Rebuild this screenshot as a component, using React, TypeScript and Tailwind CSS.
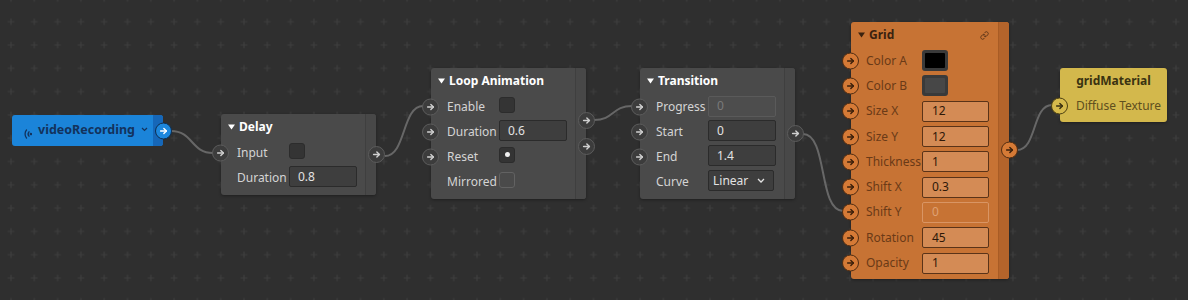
import React from "react";
import { Link } from "lucide-react";

type Tone = "gray" | "orange" | "yellow" | "blue";

const portTone: Record<Tone, string> = {
  gray: "bg-[#3c3c3c] border-[#5c5c5c] text-[#d0d0d0]",
  orange: "bg-[#d57a36] border-[#4f2c12] text-[#3a1f0b]",
  yellow: "bg-[#d6ba4c] border-[#4c4012] text-[#3a3110]",
  blue: "bg-[#1d87dd] border-[#0e2d4e] text-white",
};

function Arrow() {
  return (
    <svg width="9" height="9" viewBox="0 0 10 10" fill="none" stroke="currentColor" strokeWidth="1.6" strokeLinecap="round" strokeLinejoin="round">
      <path d="M1.8 5H8.2" />
      <path d="M5.4 2.2L8.2 5L5.4 7.8" />
    </svg>
  );
}

function Port({ tone, side = "left" }: { tone: Tone; side?: "left" | "right" }) {
  return (
    <div
      className={
        "absolute top-1/2 -translate-y-1/2 z-10 flex h-[17px] w-[17px] items-center justify-center rounded-full border-[1.5px] " +
        (side === "left" ? "left-[-9px] " : "right-[-9px] ") +
        portTone[tone]
      }
    >
      <Arrow />
    </div>
  );
}

function Caret({ color }: { color: string }) {
  return (
    <svg width="7" height="6" viewBox="0 0 7 6" className="mr-[4px]">
      <path d="M0 0.5H7L3.5 5.5Z" fill={color} />
    </svg>
  );
}

function GInput({ v, disabled }: { v: string; disabled?: boolean }) {
  return disabled ? (
    <div className="mb-[1px] flex h-[21px] w-[68px] items-center rounded-[2px] border border-[#5a5a5a] bg-[#4d4d4d] px-[8px] text-[#7a7a7a]">
      {v}
    </div>
  ) : (
    <div className="mb-[2px] flex h-[21px] w-[68px] items-center rounded-[2px] border border-[#2b2b2b] bg-[#3e3e3e] px-[8px] text-[#e2e2e2]">
      {v}
    </div>
  );
}

function Check({ dot, outline }: { dot?: boolean; outline?: boolean }) {
  return (
    <div
      className={
        "mb-[4px] flex h-[16px] w-[16px] items-center justify-center rounded-[3px] border " +
        (outline ? "border-[#626262] bg-[#4a4a4a]" : "border-[#2c2c2c] bg-[#343434]")
      }
    >
      {dot && <div className="h-[5px] w-[5px] rounded-full bg-[#f0f0f0]" />}
    </div>
  );
}

function GRow({ label, port = true, children }: { label: string; port?: boolean; children?: React.ReactNode }) {
  return (
    <div className="relative flex h-[25px] items-center pl-[16px]">
      {port && <Port tone="gray" />}
      <span className="w-[52px] text-[#d4d4d4]">{label}</span>
      {children}
    </div>
  );
}

function GrayNode({
  x,
  y,
  title,
  outputs,
  children,
}: {
  x: number;
  y: number;
  title: string;
  outputs: number;
  children: React.ReactNode;
}) {
  return (
    <div className="absolute flex w-[155px] rounded-[3px] bg-[#4a4a4a] shadow-[0_1px_3px_rgba(0,0,0,0.35)]" style={{ left: x, top: y }}>
      <div className="flex flex-1 flex-col pb-[5px]">
        <div className="flex h-[26px] items-center pl-[7px] font-bold text-white">
          <Caret color="#ffffff" />
          {title}
        </div>
        {children}
      </div>
      <div className="relative w-[11px] rounded-r-[3px] border-l border-[#3f3f3f] bg-[#484848]">
        <div className="absolute right-0 top-1/2 flex -translate-y-1/2 flex-col gap-[9px]">
          {Array.from({ length: outputs }).map((_, i) => (
            <div key={i} className="relative h-[17px] w-0">
              <Port tone="gray" side="right" />
            </div>
          ))}
        </div>
      </div>
    </div>
  );
}

function OInput({ v, disabled }: { v: string; disabled?: boolean }) {
  return disabled ? (
    <div className="flex h-[21px] w-[67px] items-center rounded-[2px] border border-[#d99564] bg-[#c77334] px-[9px] text-[#dea173]">
      {v}
    </div>
  ) : (
    <div className="flex h-[21px] w-[67px] items-center rounded-[2px] border border-[#5a3318] bg-[#d48b55] px-[9px] text-[#2e1808]">
      {v}
    </div>
  );
}

function Swatch({ fill }: { fill: string }) {
  return (
    <div className="flex h-[21px] w-[26px] items-center justify-center rounded-[3px] border-[2px] border-[#3a3a3a] bg-[#3a3a3a]">
      <div className={"h-[15px] w-[20px] rounded-[1px] " + fill} />
    </div>
  );
}

function ORow({ label, children }: { label: string; children: React.ReactNode }) {
  return (
    <div className="relative flex h-[25.3px] items-center pl-[15px]">
      <Port tone="orange" />
      <span className="w-[56px] text-[#6a3a17]">{label}</span>
      {children}
    </div>
  );
}

export default function App() {
  return (
    <div className="relative h-[300px] w-[1188px] overflow-hidden bg-[#2f2f2f] font-['Noto_Sans',sans-serif] text-[12px] leading-none">
      <svg className="absolute inset-0" width="1188" height="300">
        <defs>
          <pattern id="dots" x="-0.65" y="10.05" width="23.3" height="23.3" patternUnits="userSpaceOnUse">
            <path d="M11.65 8.4V14.9M8.4 11.65H14.9" stroke="#3d3d3d" strokeWidth="1.2" />
          </pattern>
        </defs>
        <rect width="1188" height="300" fill="url(#dots)" />
        <g fill="none" stroke="#676767" strokeWidth="2">
          <path d="M171 131C193 131 191 153 213 153" />
          <path d="M385 156C406 156 402 106 423 106" />
          <path d="M594 120C614 120 612 106 632 106" />
          <path d="M803 134C828 134 818 211 843 211" />
          <path d="M1017 150C1037 150 1032 105 1052 105" />
        </g>
      </svg>

      {/* videoRecording */}
      <div className="absolute left-[12px] top-[115px] flex h-[31px] w-[151px] rounded-[3px] bg-[#1b84d9]">
        <div className="flex flex-1 items-center pl-[11px] font-bold text-[#13325c]">
          <svg width="9" height="12" viewBox="0 0 9 12" fill="none" stroke="#13325c" strokeWidth="1.3" strokeLinecap="round" className="mr-[6px] mt-[6px]">
            <path d="M3.5 2C1.6 4 1.6 8 3.5 10" />
            <path d="M6 3.8C5 5 5 7 6 8.2" />
            <circle cx="7.9" cy="6" r="0.6" fill="#13325c" />
          </svg>
          <span className="text-[12.5px]">videoRecording</span>
          <svg width="7" height="5" viewBox="0 0 7 5" fill="none" stroke="#13325c" strokeWidth="1.2" className="ml-[6px] mb-[2px]">
            <path d="M1 1L3.5 3.5L6 1" />
          </svg>
        </div>
        <div className="relative w-[10px] rounded-r-[3px] bg-[#1667b8]">
          <Port tone="blue" side="right" />
        </div>
      </div>

      {/* Delay */}
      <GrayNode x={221} y={114} title="Delay" outputs={1}>
        <GRow label="Input">
          <Check />
        </GRow>
        <GRow label="Duration" port={false}>
          <GInput v="0.8" />
        </GRow>
      </GrayNode>

      {/* Loop Animation */}
      <GrayNode x={431} y={68} title="Loop Animation" outputs={2}>
        <GRow label="Enable">
          <Check />
        </GRow>
        <GRow label="Duration">
          <GInput v="0.6" />
        </GRow>
        <GRow label="Reset">
          <Check dot />
        </GRow>
        <GRow label="Mirrored" port={false}>
          <Check outline />
        </GRow>
      </GrayNode>

      {/* Transition */}
      <GrayNode x={640} y={68} title="Transition" outputs={1}>
        <GRow label="Progress">
          <GInput v="0" disabled />
        </GRow>
        <GRow label="Start">
          <GInput v="0" />
        </GRow>
        <GRow label="End">
          <GInput v="1.4" />
        </GRow>
        <GRow label="Curve" port={false}>
          <div className="mb-[2px] flex h-[21px] w-[66px] items-center justify-between rounded-[2px] border border-[#2b2b2b] bg-[#3e3e3e] pl-[4px] pr-[8px] text-[#e2e2e2]">
            <span>Linear</span>
            <svg width="8" height="5" viewBox="0 0 8 5" fill="none" stroke="#e2e2e2" strokeWidth="1.3">
              <path d="M1 1L4 4L7 1" />
            </svg>
          </div>
        </GRow>
      </GrayNode>

      {/* Grid */}
      <div className="absolute left-[851px] top-[22px] flex w-[158px] rounded-[3px] bg-[#c77334] shadow-[0_1px_3px_rgba(0,0,0,0.35)]">
        <div className="flex flex-1 flex-col pb-[3px]">
          <div className="flex h-[26px] items-center pl-[7px] pr-[9px] font-bold text-[#3b220f]">
            <Caret color="#3b220f" />
            <span className="flex-1">Grid</span>
            <Link size={9} strokeWidth={2.4} color="#5a3418" />
          </div>
          <ORow label="Color A">
            <Swatch fill="bg-black" />
          </ORow>
          <ORow label="Color B">
            <Swatch fill="bg-[#474747]" />
          </ORow>
          <ORow label="Size X">
            <OInput v="12" />
          </ORow>
          <ORow label="Size Y">
            <OInput v="12" />
          </ORow>
          <ORow label="Thickness">
            <OInput v="1" />
          </ORow>
          <ORow label="Shift X">
            <OInput v="0.3" />
          </ORow>
          <ORow label="Shift Y">
            <OInput v="0" disabled />
          </ORow>
          <ORow label="Rotation">
            <OInput v="45" />
          </ORow>
          <ORow label="Opacity">
            <OInput v="1" />
          </ORow>
        </div>
        <div className="relative w-[11px] rounded-r-[3px] border-l border-[#a85c25] bg-[#b4642b]">
          <Port tone="orange" side="right" />
        </div>
      </div>

      {/* gridMaterial */}
      <div className="absolute left-[1060px] top-[68px] flex h-[54px] w-[107px] flex-col rounded-[3px] bg-[#d3b84c] shadow-[0_1px_3px_rgba(0,0,0,0.35)]">
        <div className="flex h-[26px] items-center justify-center font-bold text-[#3a3211]">gridMaterial</div>
        <div className="relative flex h-[24px] items-center pl-[16px] text-[#5e4f1e]">
          <Port tone="yellow" />
          Diffuse Texture
        </div>
      </div>
    </div>
  );
}
